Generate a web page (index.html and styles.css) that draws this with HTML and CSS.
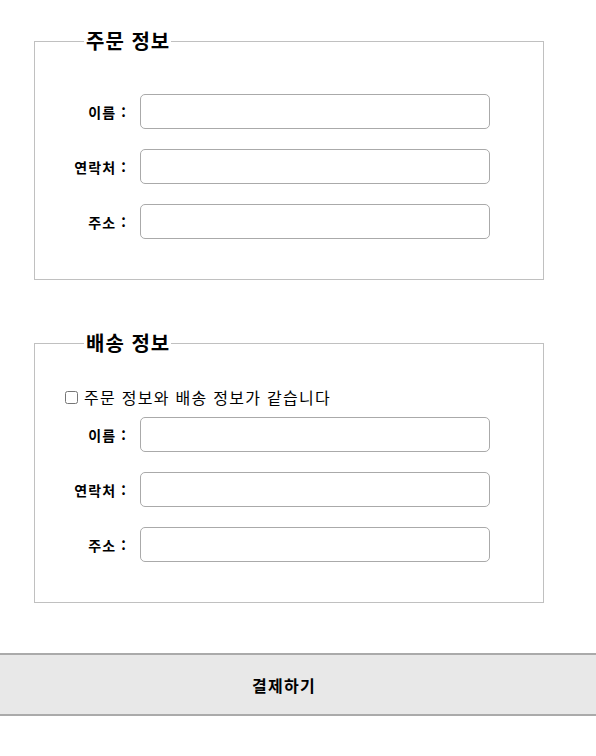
FILE: index.html
```html
<!DOCTYPE html>
<html lang="ko">
<head>
<meta charset="utf-8">
<link rel="stylesheet" href="styles.css">
</head>
<body>
<main class="page">
  <fieldset class="box">
    <legend class="box-title">주문 정보</legend>
    <div class="fields">
      <div class="row"><label class="row-label">이름 :</label><input class="row-input" type="text"></div>
      <div class="row"><label class="row-label">연락처 :</label><input class="row-input" type="text"></div>
      <div class="row"><label class="row-label">주소 :</label><input class="row-input" type="text"></div>
    </div>
  </fieldset>
  <fieldset class="box box-ship">
    <legend class="box-title">배송 정보</legend>
    <label class="same"><input class="same-check" type="checkbox">주문 정보와 배송 정보가 같습니다</label>
    <div class="fields fields-ship">
      <div class="row"><label class="row-label">이름 :</label><input class="row-input" type="text"></div>
      <div class="row"><label class="row-label">연락처 :</label><input class="row-input" type="text"></div>
      <div class="row"><label class="row-label">주소 :</label><input class="row-input" type="text"></div>
    </div>
  </fieldset>
  <button class="pay" type="button">결제하기</button>
</main>
</body>
</html>
```
FILE: styles.css
```css
html, body {
  margin: 0;
  padding: 0;
  background: #fff;
}
body {
  font-family: "Noto Sans CJK KR", "Noto Sans", sans-serif;
  color: #000;
}
.page {
  padding-top: 28px;
  display: flex;
  flex-direction: column;
}
.box {
  box-sizing: border-box;
  width: 510px;
  margin: 0 0 0 34px;
  padding: 0;
  border: 1px solid #c0c0c0;
}
.box-ship {
  margin-top: 50px;
}
.box-title {
  margin-left: 49px;
  padding: 0 1px 0 2px;
  font-size: 20px;
  font-weight: bold;
  line-height: 26px;
  letter-spacing: 1px;
}
.fields {
  display: flex;
  flex-direction: column;
  gap: 20px;
  padding: 40px 0 40px 0;
}
.fields-ship {
  padding-top: 10px;
}
.row {
  display: flex;
  align-items: center;
}
.row-label {
  width: 92px;
  text-align: right;
  font-size: 14px;
  font-weight: bold;
  letter-spacing: 0.08em;
  margin-right: 13px;
}
.row-input {
  box-sizing: border-box;
  width: 350px;
  height: 35px;
  margin: 0;
  border: 1px solid #aaa;
  border-radius: 5px;
  background: #fff;
}
.same {
  display: flex;
  align-items: center;
  margin: 31px 0 0 26px;
  font-size: 16px;
  line-height: 20px;
  letter-spacing: 0.08em;
}
.same-check {
  width: 13px;
  height: 13px;
  margin: 0 6px 0 4px;
}
.pay {
  box-sizing: border-box;
  margin-top: 50px;
  width: 100%;
  height: 63px;
  padding: 0 28px 0 0;
  background: #e8e8e8;
  border: none;
  border-top: 2px solid #aaa;
  border-bottom: 2px solid #aaa;
  font-family: "Noto Sans CJK KR", sans-serif;
  font-size: 16px;
  font-weight: bold;
  letter-spacing: 0.08em;
  color: #000;
}
```
